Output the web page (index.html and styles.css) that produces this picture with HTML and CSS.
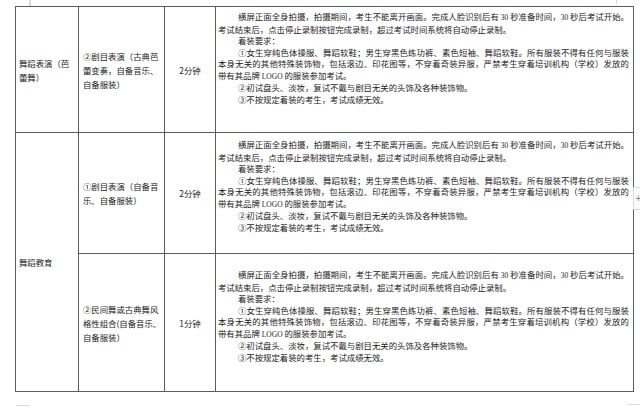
FILE: index.html
```html
<!DOCTYPE html>
<html lang="zh-CN">
<head>
<meta charset="utf-8">
<title>舞蹈考试要求</title>
<link rel="stylesheet" href="styles.css">
</head>
<body>
<div class="page">
  <span class="mark mark-tl"></span>
  <span class="mark mark-tr"></span>
  <span class="mark mark-bl"></span>
  <span class="mark mark-br"></span>
  <span class="add-btn">+</span>
  <table class="grid">
    <colgroup>
      <col class="c1"><col class="c2"><col class="c3"><col class="c4">
    </colgroup>
    <tr class="row-a">
      <td class="cat">舞蹈表演（芭<br>蕾舞）</td>
      <td class="item">②剧目表演（古典芭<br>蕾变奏，自备音乐、<br>自备服装）</td>
      <td class="time">2分钟</td>
      <td class="req pad-a">
        <div class="ln ind full">横屏正面全身拍摄，拍摄期间，考生不能离开画面。完成人脸识别后有 <span class="lat">30</span> 秒准备时间，<span class="lat">30</span> 秒后考试开始。</div>
        <div class="ln">考试结束后，点击停止录制按钮完成录制，超过考试时间系统将自动停止录制。</div>
        <div class="ln ind">着装要求：</div>
        <div class="ln ind full">①女生穿纯色体操服、舞蹈软鞋；男生穿黑色练功裤、素色短袖、舞蹈软鞋。所有服装不得有任何与服装</div>
        <div class="ln full">本身无关的其他特殊装饰物，包括滚边、印花图等，不穿着奇装异服，严禁考生穿着培训机构（学校）发放的</div>
        <div class="ln">带有其品牌 <span class="lat">LOGO</span> 的服装参加考试。</div>
        <div class="ln ind">②初试盘头、淡妆，复试不戴与剧目无关的头饰及各种装饰物。</div>
        <div class="ln ind">③不按规定着装的考生，考试成绩无效。</div>
      </td>
    </tr>
    <tr class="row-b">
      <td class="cat" rowspan="2">舞蹈教育</td>
      <td class="item">①剧目表演（自备音<br>乐、自备服装）</td>
      <td class="time">2分钟</td>
      <td class="req pad-b">
        <div class="ln ind full">横屏正面全身拍摄，拍摄期间，考生不能离开画面。完成人脸识别后有 <span class="lat">30</span> 秒准备时间，<span class="lat">30</span> 秒后考试开始。</div>
        <div class="ln">考试结束后，点击停止录制按钮完成录制，超过考试时间系统将自动停止录制。</div>
        <div class="ln ind">着装要求：</div>
        <div class="ln ind full">①女生穿纯色体操服、舞蹈软鞋；男生穿黑色练功裤、素色短袖、舞蹈软鞋。所有服装不得有任何与服装</div>
        <div class="ln full">本身无关的其他特殊装饰物，包括滚边、印花图等，不穿着奇装异服，严禁考生穿着培训机构（学校）发放的</div>
        <div class="ln">带有其品牌 <span class="lat">LOGO</span> 的服装参加考试。</div>
        <div class="ln ind">②初试盘头、淡妆，复试不戴与剧目无关的头饰及各种装饰物。</div>
        <div class="ln ind">③不按规定着装的考生，考试成绩无效。</div>
      </td>
    </tr>
    <tr class="row-c">
      <td class="item">②民间舞或古典舞风<br>格性组合(自备音乐、<br>自备服装）</td>
      <td class="time">1分钟</td>
      <td class="req pad-c">
        <div class="ln ind full">横屏正面全身拍摄，拍摄期间，考生不能离开画面。完成人脸识别后有 <span class="lat">30</span> 秒准备时间，<span class="lat">30</span> 秒后考试开始。</div>
        <div class="ln">考试结束后，点击停止录制按钮完成录制，超过考试时间系统将自动停止录制。</div>
        <div class="ln ind">着装要求：</div>
        <div class="ln ind full">①女生穿纯色体操服、舞蹈软鞋；男生穿黑色练功裤、素色短袖、舞蹈软鞋。所有服装不得有任何与服装</div>
        <div class="ln full">本身无关的其他特殊装饰物，包括滚边、印花图等，不穿着奇装异服，严禁考生穿着培训机构（学校）发放的</div>
        <div class="ln">带有其品牌 <span class="lat">LOGO</span> 的服装参加考试。</div>
        <div class="ln ind">②初试盘头、淡妆，复试不戴与剧目无关的头饰及各种装饰物。</div>
        <div class="ln ind">③不按规定着装的考生，考试成绩无效。</div>
      </td>
    </tr>
  </table>
</div>
</body>
</html>
```
FILE: styles.css
```css
html, body {
  margin: 0;
  padding: 0;
  background: #ffffff;
}
.page {
  position: relative;
  width: 640px;
  height: 408px;
  overflow: hidden;
  padding: 6px 0 0 15px;
  box-sizing: border-box;
  font-family: "Noto Sans CJK SC", sans-serif;
  font-size: 8.4px;
  color: #1c1c1c;
}
.lat {
  font-family: "Liberation Serif", serif;
  font-size: 7.5px;
}
.grid {
  border-collapse: collapse;
  table-layout: fixed;
  width: 618px;
}
.c1 { width: 63px; }
.c2 { width: 86px; }
.c3 { width: 51px; }
.c4 { width: 418px; }
.grid td {
  border: 1px solid #5c5c5c;
  padding: 0;
  line-height: 14px;
  vertical-align: middle;
  white-space: nowrap;
}
.row-a { height: 126px; }
.row-b { height: 121px; }
.row-c { height: 138px; }
.grid td.cat { padding-left: 3px; }
.grid td.item { padding-left: 4px; }
.time { text-align: center; }
.grid td.req {
  vertical-align: top;
  padding: 0 4px 0 2px;
  line-height: 11.5px;
}
.grid td.pad-a { padding-top: 4px; }
.grid td.pad-b { padding-top: 6px; }
.grid td.pad-c { padding-top: 15px; }
.ln { white-space: nowrap; overflow: visible; }
.ind { text-indent: 20px; }
.full {
  text-align: justify;
  text-align-last: justify;
}
.mark {
  position: absolute;
  background: #dcdcdc;
}
.mark-tl { left: 29px; top: 0; width: 2px; height: 6px; }
.mark-tr { left: 616px; top: 0; width: 1px; height: 4px; }
.mark-bl { left: 16px; top: 405px; width: 14px; height: 1px; }
.mark-br { left: 627px; top: 404px; width: 13px; height: 1px; }
.add-btn {
  position: absolute;
  left: 633px;
  top: 187px;
  width: 6px;
  height: 21px;
  border: 1px solid #d8d8d8;
  border-right: 0;
  background: #fafafa;
  color: #777;
  font-family: "DejaVu Sans", sans-serif;
  font-size: 8px;
  line-height: 21px;
  padding-left: 1px;
  overflow: hidden;
}
```
